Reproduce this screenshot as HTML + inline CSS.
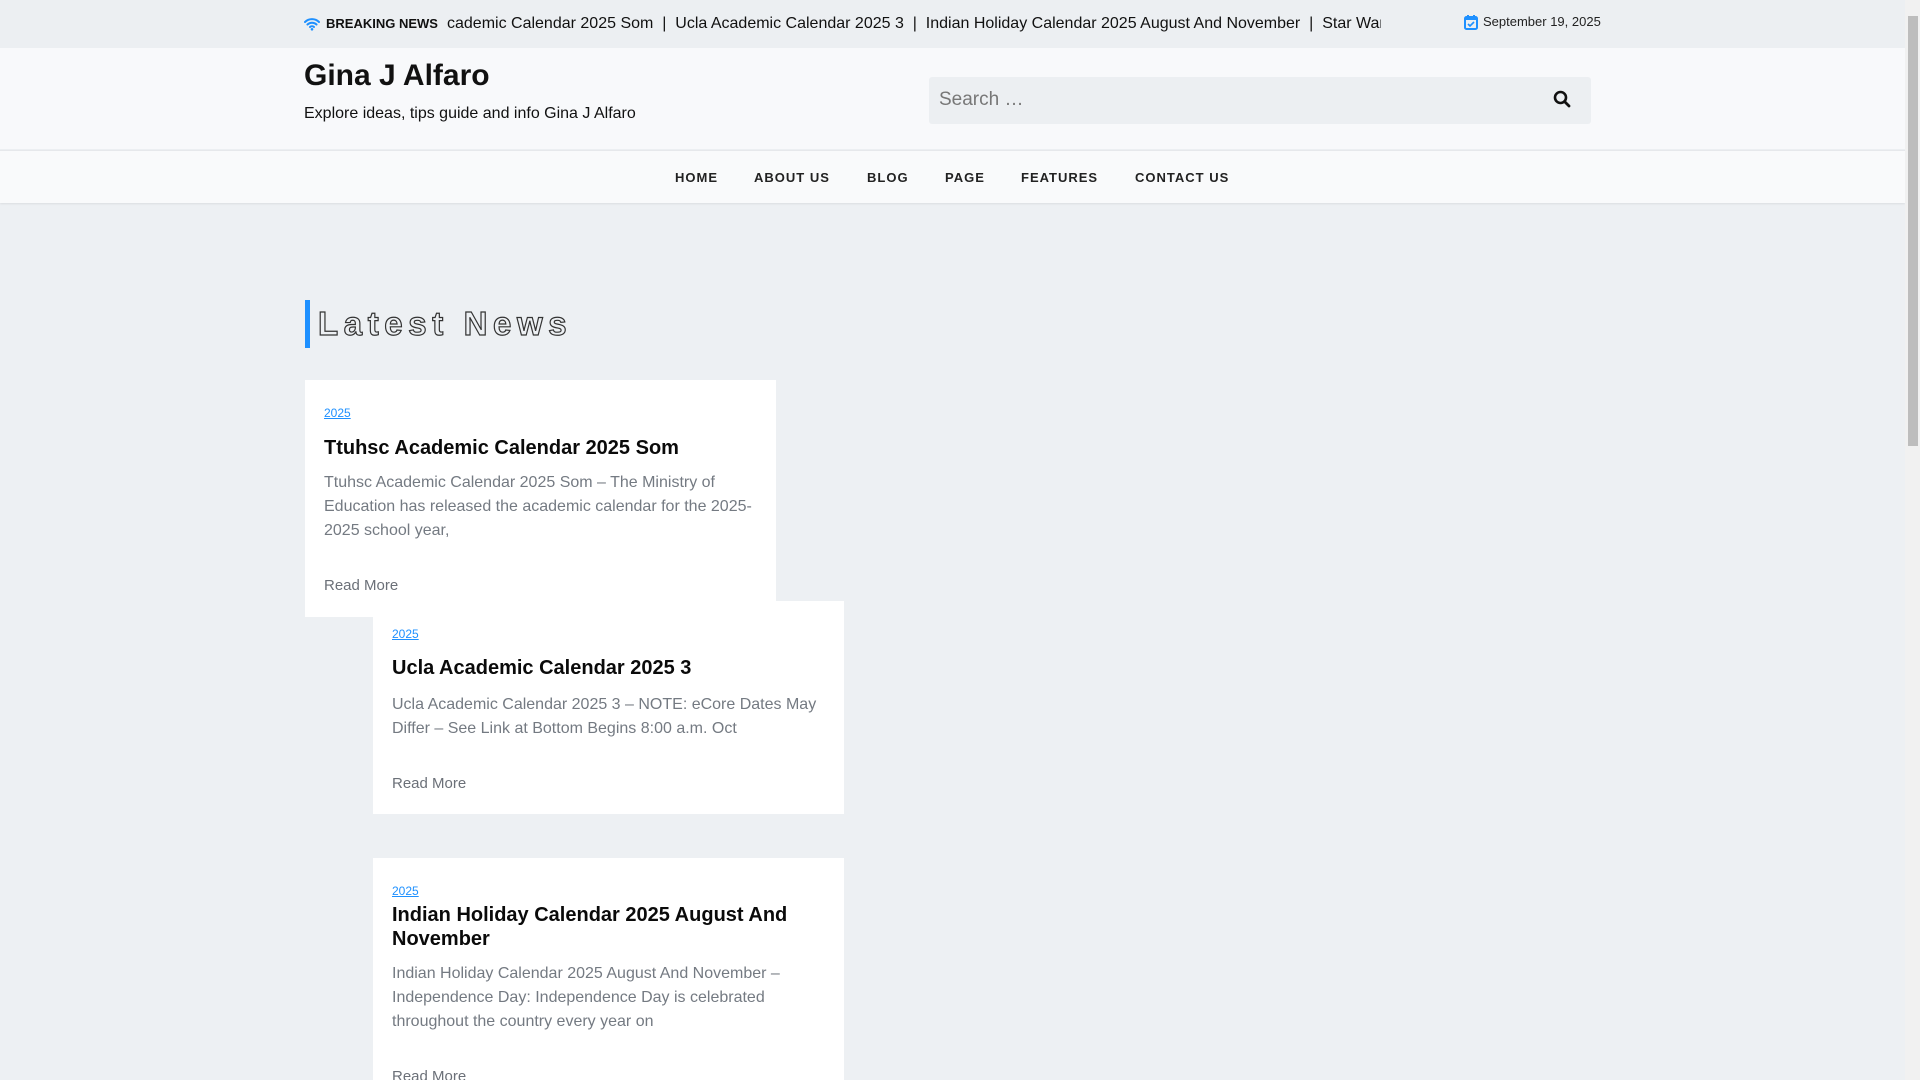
<!DOCTYPE html>
<html><head><meta charset="utf-8"><style>
*{margin:0;padding:0;box-sizing:border-box}
html,body{width:1920px;height:1080px;overflow:hidden}
body{background:#edf0f3;font-family:"Liberation Sans",Arial,sans-serif;position:relative;color:#111}
.a{position:absolute;white-space:nowrap}
.top{position:absolute;left:0;top:0;width:1905px;height:48px;background:#eceff2}
.hdr{position:absolute;left:0;top:48px;width:1905px;height:101px;background:#f8f9fb}
.nav{position:absolute;left:0;top:150px;width:1905px;height:53px;background:#f9fafb;border-top:1px solid #e6e8eb;box-shadow:0 1px 2px rgba(0,0,0,.08)}
.nav span{position:absolute;top:19px;font-size:13px;font-weight:bold;letter-spacing:1px;color:#222}
.sb{position:absolute;right:0;top:0;width:15px;height:1080px;background:#f1f1f1}
.sb i{position:absolute;left:3px;top:16px;width:10px;height:430px;background:#bdbdbd}
.card{position:absolute;background:#fff;width:471px}
.cat{position:absolute;left:19px;font-size:12px;color:#1e90ff;text-decoration:underline}
.tt{position:absolute;left:19px;font-size:20px;font-weight:bold;color:#0a0a0a;line-height:24px;width:420px;white-space:normal}
.ex{position:absolute;left:19px;font-size:16px;color:#747a82;line-height:24px;width:435px}
.rm{position:absolute;left:19px;font-size:15px;color:#6b7078}
</style></head><body>
<div class="top"></div>
<svg class="a" style="left:304px;top:17px" width="16" height="14" viewBox="0 0 16 14"><path d="M1 5a10 10 0 0 1 14 0M3.5 7.5a6.5 6.5 0 0 1 9 0M6 10a3 3 0 0 1 4 0" stroke="#1e90ff" stroke-width="2" fill="none" stroke-linecap="round"/><circle cx="8" cy="12.3" r="1.3" fill="#1e90ff"/></svg>
<div class="a" style="left:326px;top:16px;font-size:13px;font-weight:bold;color:#111">BREAKING NEWS</div>
<div class="a" style="left:447px;top:15px;width:934px;overflow:hidden;font-size:16px;color:#111">cademic Calendar 2025 Som &nbsp;|&nbsp; Ucla Academic Calendar 2025 3 &nbsp;|&nbsp; Indian Holiday Calendar 2025 August And November &nbsp;|&nbsp; Star Wars</div>
<svg class="a" style="left:1464px;top:14px" width="14" height="16" viewBox="0 0 14 16"><rect x="1" y="3" width="12" height="12" rx="1.5" fill="none" stroke="#1e90ff" stroke-width="2"/><rect x="1" y="3" width="12" height="3" fill="#1e90ff"/><path d="M4 1v3M10 1v3" stroke="#1e90ff" stroke-width="2"/><path d="M4 10l2 2 4-4" stroke="#1e90ff" stroke-width="1.6" fill="none"/></svg>
<div class="a" style="left:1483px;top:14px;font-size:13px;color:#222">September 19, 2025</div>
<div class="hdr"></div>
<div class="a" style="left:304px;top:59px;font-size:30px;font-weight:bold;color:#111">Gina J Alfaro</div>
<div class="a" style="left:304px;top:105px;font-size:16px;color:#111">Explore ideas, tips guide and info Gina J Alfaro</div>
<div class="a" style="left:929px;top:77px;width:662px;height:47px;background:#eceff2;border-radius:3px"></div>
<div class="a" style="left:939px;top:89px;font-size:19px;color:#777">Search …</div>
<svg class="a" style="left:1553px;top:90px" width="18" height="18" viewBox="0 0 18 18"><circle cx="7.5" cy="7.5" r="5.5" fill="none" stroke="#111" stroke-width="2.6"/><path d="M11.5 11.5l4.5 4.5" stroke="#111" stroke-width="2.8" stroke-linecap="round"/></svg>
<div class="nav"><span style="left:675px">HOME</span><span style="left:754px">ABOUT US</span><span style="left:867px">BLOG</span><span style="left:945px">PAGE</span><span style="left:1021px">FEATURES</span><span style="left:1135px">CONTACT US</span></div>
<div class="a" style="left:305px;top:300px;width:5px;height:48px;background:#1e90ff"></div>
<div class="a" style="left:318px;top:305px;font-size:33px;font-weight:bold;letter-spacing:5.6px;color:transparent;-webkit-text-stroke:1.2px #333">Latest News</div>
<div class="card" style="left:305px;top:380px;height:237px">
<div class="cat" style="top:26px">2025</div>
<div class="tt" style="top:56px">Ttuhsc Academic Calendar 2025 Som</div>
<div class="ex" style="top:91px">Ttuhsc Academic Calendar 2025 Som – The Ministry of Education has released the academic calendar for the 2025-2025 school year,</div>
<div class="rm" style="top:197px">Read More</div>
</div>
<div class="card" style="left:373px;top:601px;height:213px">
<div class="cat" style="top:26px">2025</div>
<div class="tt" style="top:55px">Ucla Academic Calendar 2025 3</div>
<div class="ex" style="top:92px">Ucla Academic Calendar 2025 3 – NOTE: eCore Dates May Differ – See Link at Bottom Begins 8:00 a.m. Oct</div>
<div class="rm" style="top:174px">Read More</div>
</div>
<div class="card" style="left:373px;top:858px;height:240px">
<div class="cat" style="top:26px">2025</div>
<div class="tt" style="top:45px">Indian Holiday Calendar 2025 August And November</div>
<div class="ex" style="top:104px">Indian Holiday Calendar 2025 August And November – Independence Day: Independence Day is celebrated throughout the country every year on</div>
<div class="rm" style="top:210px">Read More</div>
</div>
<div class="sb"><i></i></div>
</body></html>
